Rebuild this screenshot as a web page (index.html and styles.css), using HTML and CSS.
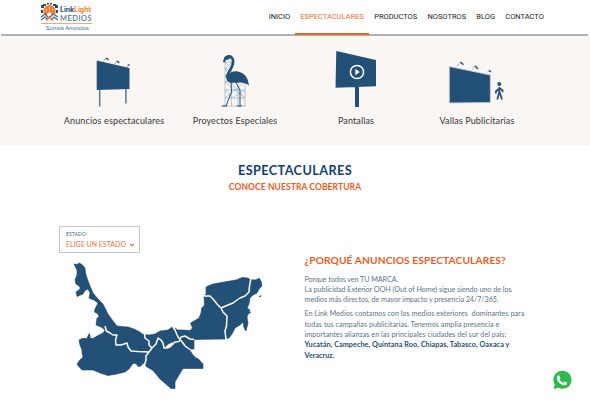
FILE: index.html
```
<!DOCTYPE html>
<html lang="es">
<head>
<meta charset="utf-8">
<title>Link Light Medios</title>
<link rel="stylesheet" href="styles.css">
</head>
<body>
<header class="header">
  <div class="logo">
    <div class="logo-top">
      <svg class="logo-mark" viewBox="0 0 17 18">
        <path class="blue" d="M0 5V2h2V1h3v2H3v2zM12 1h3v1h2v3h-3V3h-2zM0 7h2v3H0zM15 7h2v3h-2zM6 0h2v1.500H6zM9 0h2v1.500H9z"/>
        <path class="orange" d="M2.500 11V6L5 3l3-1h1l3 1 2.500 3v5l-3 1-3-3-3 3z"/>
        <path class="wave blue-line" d="M0 14l4-3 4 4 4-4 5 3M0 17l4-3 3 3M10 17l3-3 4 3"/>
        <path class="wave orange-line" d="M5 17.500l3.500-3.500 3.500 3.500"/>
        <path class="wave white-line" d="M5 6l1 2M8.500 4v3M12 6l-1 2"/>
      </svg>
      <div class="brand">
        <div class="brand-name">Link<span>Light</span></div>
        <div class="brand-sub">MEDIOS</div>
      </div>
    </div>
    <div class="tagline">Somos Anuncios</div>
  </div>
  <nav class="nav">
    <a>INICIO</a><a class="active">ESPECTACULARES</a><a>PRODUCTOS</a><a>NOSOTROS</a><a>BLOG</a><a>CONTACTO</a>
  </nav>
</header>

<section class="products">
  <div class="product">
    <svg class="icon" viewBox="91 50 46 58">
      <path class="pole" d="M99.700 89v17.500M125.900 88v15.500"/>
      <path class="blue" d="M96.700 60.500L129.500 68v21l-32.800 1z"/>
      <path class="lamp" d="M103.500 61.500l1.500-3 2.500.5M115 64.200l1.300-3 2.500.5M127 67l.8-2 1.500.5"/>
      <path class="lamp-head" d="M106 58l2.500 2M117 61l2.300 2M128 64.500l1.500 1"/>
    </svg>
    <div class="label w1">Anuncios espectaculares</div>
  </div>
  <div class="product">
    <svg class="icon" viewBox="211 50 46 58">
      <path class="lattice" d="M224 60v46M230.500 61v45M237 80v26M244 82v24M224 62h7M224 69h7M224 76h7M224 82h20M224 90h20M224 98h20M220 106h25M224 62l7 7-7 7 20 22M231 62l-7 7 7 7-7 6 20 16M224 90l7 8M244 82l-20 16M244 90l-13 8"/>
      <path class="blue" d="M226 79c0-5 5-9 11-7.500 6 1.500 10 5 11 14-4-3-7-3-11-3-7 1-11 0-11-3.500z"/>
      <path class="neck" d="M228 80c-6-5 6-12 4-20-1.500-4.500-5-4.500-7.500-2"/>
      <path class="blue" d="M228 55.500l-4.500 1.500-1.500 4 1 2 2-3 4-1z"/>
      <path class="leg" d="M230 82l.5 10-5.500 14M234 81l5 9v16M221 106h5M236 106h5"/>
    </svg>
    <div class="label w2">Proyectos Especiales</div>
  </div>
  <div class="product">
    <svg class="icon" viewBox="333 50 46 58">
      <path class="blue" d="M336.300 51L376 60v26.300l-40.500 1.500zM355 86h4v21h-4z"/>
      <circle class="play-ring" cx="357" cy="72" r="6.600"/>
      <path class="white" d="M355.300 68.700l4.400 3.300-4.400 3.300z"/>
    </svg>
    <div class="label w3">Pantallas</div>
  </div>
  <div class="product">
    <svg class="icon wide" viewBox="444 50 66 58">
      <path class="valla" d="M449.300 66.500l41 8.500v27.500l-41 .5z"/>
      <path class="lamp" d="M457.500 66l2-3 2.500-.5M472.500 69.500l2-3.500 2-.3M487.500 72.500l1-2 2 .3"/>
      <path class="lamp-head" d="M460.500 62l3 2.700M475 66l3 3M489 70.500l2 1.500"/>
      <circle class="blue" cx="499.300" cy="84" r="2"/>
      <path class="person" d="M499.300 87v6M499.300 88.500l-3.500 3 .2 2M499.300 88l3.200 2.300v2M499.300 92l-2 7.500M499.500 92l2.500 7.500"/>
    </svg>
    <div class="label w4">Vallas Publicitarias</div>
  </div>
</section>

<section class="heading">
  <h1>ESPECTACULARES</h1>
  <h2>CONOCE NUESTRA COBERTURA</h2>
</section>

<main class="content">
  <div class="coverage">
    <div class="select">
      <div class="select-label">ESTADO</div>
      <div class="select-value"><span>ELIGE UN ESTADO</span>
        <svg class="chevron" viewBox="0 0 6 4"><path d="M1 .8l2 2 2-2"/></svg>
      </div>
    </div>
    <svg class="map" viewBox="70 258 200 136">
      <path class="land" d="M74 264L77 264.500 79 263 82 264.500 85 268 85.500 273 87 278 90 286 93 293 98 299 103 304 108 314 113 321 117 326 121 326.500 128 327 134 329 140 332 143 334.500 149 335 155 334 160 331 168 330 172 327 174 327.500 178 330 184 330 190 330.500 192.500 328 190.500 323 194 321 199 318 201 313 201.700 308 204.500 305 204 296 206 294 206 287 209 285.500 213 284 227 281.500 236 280 242 277.500 248 278 250 279.500 255 280 257 279.500 259 278 261 281 262 286 259 289 257 293 253 295 250 298 249 304 247 308 250 310 249 312 247 317 248 323 246 331 244 328 243 322 240 325 235 328 232 334 229 338 225 339 194 339.500 194 349 189 349 193 355 196 358 198 358.500 203 364 203 368.500 183 368.500 179 375 175 382 175 388.500 171 388.500 160 379 153 370.500 147 367 143 363 141 366 138 366.500 136 363.500 133 363.500 129 369 125 372 117 374 108 375.500 100 373 93 370 82 370 77 364.500 79 361 83 357 82 353 82 350 80 345 79 340 82 338.500 87 338.500 89 333.500 90 335 90 338 93 338.500 97 336 103 333 105 330 101 327 96 325 97 318 99 317 98 314 94.500 312 95 309 98 303 94 300 91 299 89 298 90 293 88 289 85 290.500 83 294 77 296.500 76 292 80 289 80 287 76 284 75 280 77 275 77 270z"/>
      <path class="land" d="M259 296.500L261 295.500 260 297zM247 313L251 312 248 314z"/>
      <path class="border" d="M105 326L106.500 331 110 333 113 335 117 335 115.500 340 116 345 121 345 127 343 128 347 131 351 138 351.500 149 352M144.500 333L145 338 149 341 149 345 152 348 149 352 146 356 146 360 144 367M152 348L156 344 158 338 161 340 163 343 164 348 166 348 172 343 167.500 348 171 346 175 342 179 341.500 181 337 185 336 190 339 194 339.500M166 347L170 344M172.500 326L175 330 178 337 183 343 185 346 190 349.500M204 296L210 296 214 300 217 304 221 308 223 312 227 316 226.500 326 225 331 226 340M221 308L228 305 233 303 237 300 240 298 245 296 249 292 249.500 286 251 278"/>
    </svg>
  </div>
  <article class="about">
    <h3>¿PORQUÉ ANUNCIOS ESPECTACULARES?</h3>
    <p><span class="l1">Porque todos ven TU MARCA.</span><br><span class="l2">La publicidad Exterior OOH (Out of Home) sigue siendo uno de los</span><br><span class="l3">medios más directos, de mayor impacto y presencia 24/7/365.</span></p>
    <p><span class="l4">En Link Medios contamos con los medios exteriores&nbsp; dominantes para</span><br><span class="l5">todas tus campañas publicitarias. Tenemos amplia presencia e</span><br><span class="l6">importantes alianzas en las principales ciudades del sur del país:</span><br><b><span class="l7">Yucatán, Campeche, Quintana Roo, Chiapas, Tabasco, Oaxaca y</span><br><span class="l8">Veracruz.</span></b></p>
  </article>
</main>
<svg class="whatsapp" viewBox="0 0 20 20">
  <path class="wa-bubble" d="M10.500.8a9 9 0 1 1-4.300 16.900L1.500 19l1.200-4.500A9 9 0 0 1 10.500.8z"/>
  <path class="white" d="M7 5.200l1.500 3-1 1.300c.8 1.600 2 2.700 3.600 3.300l1.400-1.400 2.700 1.400c.2 2-2 2.900-3.700 2.400-3.200-.8-6-3.500-6.500-6.500C4.800 7 5.700 5 7 5.200z"/>
</svg>
</body>
</html>
```
FILE: styles.css
```
* { box-sizing: border-box; }
body { margin: 0; width: 590px; height: 403px; overflow: hidden; background: #fff; font-family: Lato, sans-serif; color: #333; }
svg { display: block; }
.header { height: 36px; display: flex; justify-content: space-between; padding: 0 39px 0 40px; border-bottom: 2px solid #b3b1af; margin: 0 2px 0 1px; }
.logo { padding-top: 3px; width: 51px; }
.logo-top { display: flex; gap: 2px; height: 20.500px; border-bottom: 1px solid #f5a77c; }
.logo-mark { width: 17px; height: 18px; flex: none; }
.brand { padding-top: 2px; white-space: nowrap; }
.brand-name { font: 700 7px/9px Inter, sans-serif; color: #235077; letter-spacing: -.05px; }
.brand-name span { color: #fa7b2d; }
.brand-sub { font: 500 7.400px/9px Lato, sans-serif; color: #386a91; letter-spacing: .55px; }
.tagline { font: 5.800px/8px "Liberation Sans", sans-serif; color: #386a91; text-align: right; white-space: nowrap; padding-right: 3px; }
.nav { display: flex; height: 35px; font: 7.500px/33px Roboto, sans-serif; color: #222; }
.nav a { padding: 0 5.100px; white-space: nowrap; }
.nav .active { color: #fa6a28; border-bottom: 2px solid #e56325; }
.products { height: 109px; background: #faf6f3; display: grid; grid-template-columns: 122px 120px 122px 120px; padding: 14px 0 0 53px; }
.product { display: flex; flex-direction: column; align-items: center; }
.icon { width: 46px; height: 58px; }
.wide { width: 66px; }
.label { font-size: 9px; line-height: 14px; margin-top: 6px; white-space: nowrap; color: #35383c; }
.w1 { letter-spacing: .15px; }
.w2 { letter-spacing: .13px; }
.w3 { letter-spacing: .13px; }
.w4 { letter-spacing: .12px; }
.blue { fill: #235077; }
.orange { fill: #fa7b2d; }
.white { fill: #fff; }
.wave { fill: none; stroke-width: 1.300; }
.blue-line { stroke: #386a91; }
.orange-line { stroke: #fa7b2d; }
.white-line { stroke: #fff; stroke-width: .7; }
.pole { stroke: #547b9c; stroke-width: 1.500; }
.lamp { fill: none; stroke: #83a0b8; stroke-width: .7; }
.lamp-head { stroke: #235077; stroke-width: 1.500; }
.lattice { fill: none; stroke: #8da8bc; stroke-width: .6; }
.neck { fill: none; stroke: #235077; stroke-width: 2.600; }
.leg { fill: none; stroke: #235077; stroke-width: 1; }
.play-ring { fill: none; stroke: #fff; stroke-width: 1.500; }
.valla { fill: #235077; stroke: #c6d1da; stroke-width: .8; }
.person { fill: none; stroke: #235077; stroke-width: 1.800; }
.heading { height: 81px; padding-top: 17px; text-align: center; }
h1, h2, h3, p { margin: 0; white-space: nowrap; }
h1 { font-size: 12.700px; line-height: 16px; color: #123f73; letter-spacing: .4px; }
h2 { font-size: 8.500px; line-height: 12px; margin-top: 3px; color: #f15a1d; letter-spacing: .1px; }
.content { display: flex; }
.coverage { width: 304.500px; }
.select { margin-left: 59px; width: 81px; height: 27px; border: 1px solid #c4c4c4; padding: 4px 0 0 6px; }
.select-label { font-size: 5px; line-height: 7px; color: #386080; letter-spacing: .1px; }
.select-value { display: flex; align-items: center; gap: 3px; font-size: 7px; line-height: 13px; color: #fa7040; white-space: nowrap; }
.chevron { width: 6px; height: 4px; fill: none; stroke: #fa6030; stroke-width: 1.100; }
.map { width: 200px; height: 136px; margin: 5px 0 0 70px; }
.land { fill: #235077; stroke: #1b466b; stroke-width: .6; stroke-linejoin: round; }
.border { fill: none; stroke: #fff; stroke-width: 1.500; stroke-linejoin: round; }
.about { padding-top: 26px; }
h3 { font-size: 10.200px; line-height: 16px; color: #f15a1d; letter-spacing: .12px; }
p { font-size: 7.200px; line-height: 10.300px; color: #5d7488; margin-bottom: 4px; }
h3 + p { margin-top: 6.500px; }
.l1 { letter-spacing: -.08px; }
.l2, .l3 { letter-spacing: -.03px; }
.l4 { letter-spacing: .02px; }
.l5, .l6 { letter-spacing: .035px; }
.l7 { letter-spacing: .08px; }
b { color: #234f75; }
.whatsapp { position: absolute; left: 552px; top: 370px; width: 20px; height: 20px; }
.wa-bubble { fill: #2fba4b; }
```
